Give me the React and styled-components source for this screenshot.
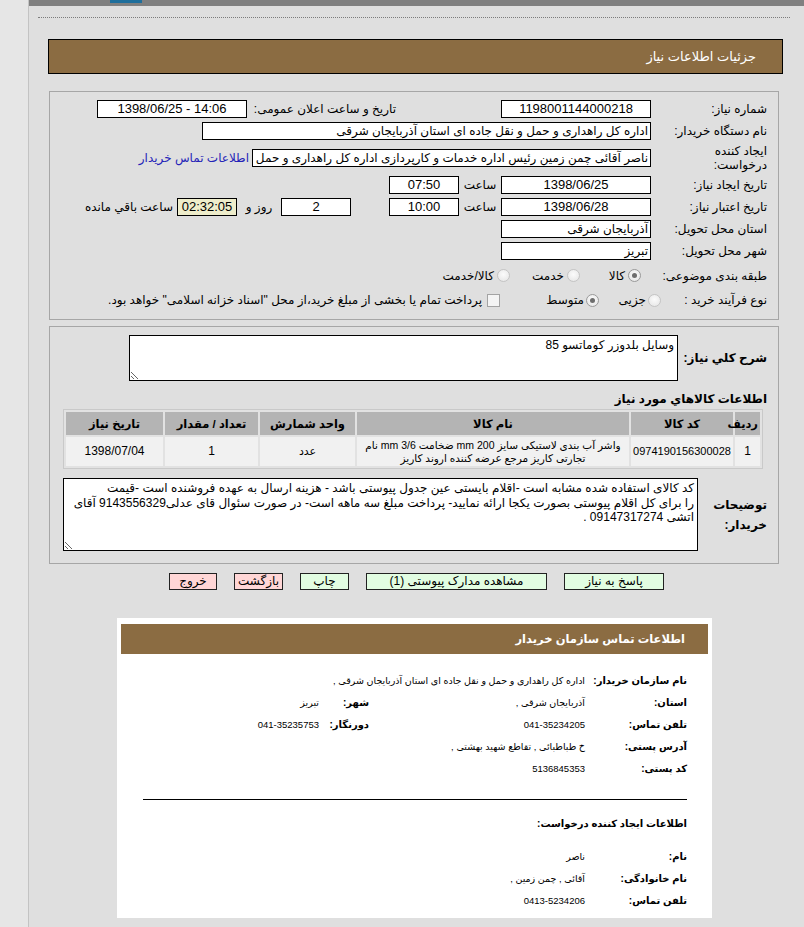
import React from "react";
import styled, { createGlobalStyle } from "styled-components";

const FONT = `"Liberation Sans", "DejaVu Sans", sans-serif`;

const GlobalStyle = createGlobalStyle`
  html, body { margin: 0; padding: 0; background: #dfdfdf; }
  body { font-family: ${FONT}; color: #000; }
`;

const Page = styled.div`
  display: flex;
  min-height: 927px;
  overflow: hidden;
`;

const SideStrip = styled.div`
  width: 28px;
  flex: none;
  background: #e6e6e6;
  border-right: 1px solid #c3c3c3;
`;

const Main = styled.div`
  flex: 1;
  min-width: 0;
  background: #dfdfdf;
  padding-bottom: 12px;
`;

const TopBar = styled.div`
  height: 6px;
  background: #808080;
  display: flex;
  align-items: flex-start;
`;

const TopBadge = styled.span`
  margin-left: 81px;
  width: 32px;
  height: 3px;
  background: #1f6f9c;
`;

const DottedRule = styled.div`
  margin: 11px 14px 0 9px;
  border-top: 1px dotted #7c7c7c;
`;

const TitleBar = styled.div`
  margin: 21px 21px 0 19px;
  height: 35px;
  box-sizing: border-box;
  border: 1px solid #000;
  background: #8b6c42;
  color: #fff;
  direction: rtl;
  display: flex;
  align-items: center;
  padding-right: 26px;
  font-size: 13px;
`;

const Panel = styled.div`
  margin: ${(p) => p.$mt}px 25px 0 20px;
  border: 1px solid #a6a6a6;
  direction: rtl;
  padding: ${(p) => p.$pad};
`;

const FieldRow = styled.div`
  display: flex;
  align-items: center;
  height: ${(p) => p.$h || 22}px;
`;

const Label = styled.div`
  flex: none;
  width: ${(p) => p.$w}px;
  box-sizing: border-box;
  padding-right: ${(p) => p.$pr || 0}px;
  font-size: ${(p) => p.$fs || 12}px;
  line-height: ${(p) => p.$lh || 16}px;
  font-weight: ${(p) => (p.$bold ? "bold" : "normal")};
  text-align: right;
  white-space: nowrap;
`;

const Box = styled.div`
  flex: none;
  box-sizing: border-box;
  width: ${(p) => p.$w}px;
  height: 18px;
  border: 1px solid #000;
  background: ${(p) => p.$bg || "#fff"};
  font-size: ${(p) => p.$fs || 13}px;
  line-height: 16px;
  text-align: ${(p) => p.$align || "center"};
  padding: 0 2px;
  overflow: hidden;
  white-space: nowrap;
`;

const Sep = styled.div`
  flex: none;
  width: ${(p) => p.$w}px;
  text-align: center;
  font-size: 12px;
  white-space: nowrap;
`;

const Gap = styled.div`
  flex: none;
  width: ${(p) => p.$w}px;
`;

const Plain = styled.span`
  margin-right: ${(p) => p.$mr || 0}px;
  font-size: 12px;
  white-space: nowrap;
`;

const Link = styled.a`
  margin-right: 3px;
  font-size: 12px;
  color: #2424b8;
  text-decoration: none;
  white-space: nowrap;
`;

const Option = styled.label`
  flex: none;
  display: flex;
  align-items: center;
  box-sizing: border-box;
  width: ${(p) => (p.$w ? `${p.$w}px` : "auto")};
  gap: ${(p) => p.$gap || 3}px;
  margin-right: ${(p) => p.$mr || 0}px;
  font-size: 12px;
  white-space: nowrap;
`;

const RadioMark = styled.span`
  flex: none;
  box-sizing: border-box;
  width: 13px;
  height: 13px;
  border-radius: 50%;
  border: 1px solid ${(p) => (p.$checked ? "#9a9a9a" : "#c4c4c4")};
  background: radial-gradient(circle at 50% 40%, #fbfbfb 0%, #e4e4e4 100%);
  display: inline-flex;
  align-items: center;
  justify-content: center;
  &::after {
    content: "";
    width: 5px;
    height: 5px;
    border-radius: 50%;
    background: ${(p) => (p.$checked ? "#6e6e6e" : "transparent")};
  }
`;

const CheckMark = styled.span`
  flex: none;
  box-sizing: border-box;
  width: 13px;
  height: 13px;
  border: 1px solid #a3a3a3;
  background: #f4f4f4;
`;

const TextArea = styled.textarea`
  display: block;
  flex: none;
  box-sizing: border-box;
  width: ${(p) => p.$w}px;
  height: ${(p) => p.$h}px;
  margin: 0;
  border: 1px solid #000;
  background: #fff;
  color: #000;
  font-family: ${FONT};
  font-size: 12px;
  line-height: 14.5px;
  padding: 2px 3px;
  white-space: pre;
  overflow: hidden;
  resize: both;
  direction: rtl;
  outline: none;
`;

const SectionHeading = styled.div`
  margin-top: 10px;
  height: 16px;
  line-height: 16px;
  font-size: 12px;
  font-weight: bold;
  text-align: right;
`;

const ItemsTable = styled.table`
  table-layout: fixed;
  width: 700px;
  margin: 2px 4px 0 0;
  border: 1px solid #c9c9c9;
  border-spacing: 2px;
  background: #e2e2e2;
  font-size: 12px;
  direction: rtl;
`;

const Th = styled.th`
  box-sizing: border-box;
  width: ${(p) => p.$w}px;
  height: 23px;
  background: #b4b4b4;
  font-weight: bold;
  font-size: 11.5px;
  padding: 0 2px;
  white-space: nowrap;
`;

const Td = styled.td`
  box-sizing: border-box;
  height: 29px;
  background: #f1f1f1;
  text-align: center;
  font-size: ${(p) => p.$fs || 12}px;
  line-height: 13px;
  padding: 0 1px;
  white-space: nowrap;
  overflow: hidden;
`;

const NotesRow = styled.div`
  display: flex;
  align-items: center;
  margin-top: 9px;
`;

const ButtonRow = styled.div`
  display: flex;
  justify-content: center;
  gap: 17px;
  margin-top: 9px;
  direction: rtl;
`;

const Button = styled.button`
  box-sizing: border-box;
  width: ${(p) => p.$w}px;
  height: 17px;
  padding: 0;
  border: 1px solid #222;
  background: ${(p) => (p.$tone === "red" ? "#ffd6d6" : "#e2fde2")};
  font-family: ${FONT};
  font-size: 12px;
  line-height: 15px;
  color: #000;
  white-space: nowrap;
  overflow: visible;
  cursor: pointer;
`;

const Card = styled.div`
  margin: 28px 92px 0 88px;
  background: #fff;
  padding: 6px 4px 7px;
  direction: rtl;
`;

const CardHeader = styled.div`
  height: 30px;
  background: #8b6c42;
  color: #fff;
  font-weight: bold;
  font-size: 11.5px;
  display: flex;
  align-items: center;
  padding-right: 23px;
`;

const CardBody = styled.div`
  padding: 15px 21px 0 22px;
`;

const InfoGrid = styled.div`
  display: grid;
  grid-template-columns: ${(p) => p.$cols};
  grid-auto-rows: 22px;
  align-items: center;
  margin-top: ${(p) => p.$mt || 0}px;
`;

const InfoLabel = styled.div`
  font-size: 10px;
  font-weight: bold;
  white-space: nowrap;
  padding-right: ${(p) => p.$pr || 0}px;
`;

const InfoValue = styled.div`
  font-size: 9.5px;
  white-space: nowrap;
  padding-right: ${(p) => p.$pr || 0}px;
  grid-column: ${(p) => (p.$span ? `span ${p.$span}` : "auto")};
`;

const Rule = styled.hr`
  border: 0;
  border-top: 1px solid #000;
  margin: 20px 0 0;
`;

const SubHeading = styled.div`
  margin-top: 16px;
  height: 16px;
  line-height: 16px;
  font-size: 10px;
  font-weight: bold;
`;

const notes =
  "کد کالای استفاده شده مشابه است -اقلام بایستی عین جدول پیوستی باشد - هزینه ارسال به عهده فروشنده است -قیمت\n" +
  "را برای کل اقلام پیوستی بصورت یکجا ارائه نمایید- پرداخت مبلغ سه ماهه است- در صورت سئوال قای عدلی9143556329 آقای\n" +
  "اتشی 09147317274 .";

function Radio({ checked, children, mr, gap, w }) {
  return (
    <Option $mr={mr} $gap={gap} $w={w}>
      <RadioMark $checked={checked} />
      <span>{children}</span>
    </Option>
  );
}

export default function App() {
  return (
    <>
      <GlobalStyle />
      <Page>
        <SideStrip />
        <Main>
          <TopBar>
            <TopBadge />
          </TopBar>
          <DottedRule />
          <TitleBar>جزئیات اطلاعات نیاز</TitleBar>

          <Panel $mt={17} $pad="6px 11px 8px 0">
            <FieldRow>
              <Label $w={116}>شماره نیاز:</Label>
              <Box $w={150}>1198001144000218</Box>
              <Label $w={254} $pr={105}>تاریخ و ساعت اعلان عمومی:</Label>
              <Box $w={150} dir="ltr">1398/06/25 - 14:06</Box>
            </FieldRow>
            <FieldRow>
              <Label $w={116}>نام دستگاه خریدار:</Label>
              <Box $w={449} $align="right" $fs={12}>اداره کل راهداری و حمل و نقل جاده ای استان آذربایجان شرقی</Box>
            </FieldRow>
            <FieldRow $h={31}>
              <Label $w={116} $lh={14}>
                ایجاد کننده
                <br />
                درخواست:
              </Label>
              <Box $w={399} $align="right" $fs={12}>
                ناصر آقائی چمن زمین رئیس اداره خدمات و کارپردازی اداره کل راهداری و حمل و
              </Box>
              <Link href="#">اطلاعات تماس خریدار</Link>
            </FieldRow>
            <FieldRow $h={23}>
              <Label $w={116}>تاریخ ایجاد نیاز:</Label>
              <Box $w={150}>1398/06/25</Box>
              <Sep $w={42}>ساعت</Sep>
              <Box $w={70}>07:50</Box>
            </FieldRow>
            <FieldRow>
              <Label $w={116}>تاریخ اعتبار نیاز:</Label>
              <Box $w={150}>1398/06/28</Box>
              <Sep $w={42}>ساعت</Sep>
              <Box $w={70}>10:00</Box>
              <Gap $w={38} />
              <Box $w={70}>2</Box>
              <Sep $w={44}>روز و</Sep>
              <Box $w={60} $bg="#eeedcb">02:32:05</Box>
              <Plain $mr={4}>ساعت باقي مانده</Plain>
            </FieldRow>
            <FieldRow>
              <Label $w={116}>استان محل تحویل:</Label>
              <Box $w={150} $align="right" $fs={12}>آذربایجان شرقی</Box>
            </FieldRow>
            <FieldRow>
              <Label $w={116}>شهر محل تحویل:</Label>
              <Box $w={150} $align="right" $fs={12}>تبریز</Box>
            </FieldRow>
            <FieldRow $h={27}>
              <Label $w={116}>طبقه بندی موضوعی:</Label>
              <Radio checked mr={10} w={61}>کالا</Radio>
              <Radio w={70}>خدمت</Radio>
              <Radio>کالا/خدمت</Radio>
            </FieldRow>
            <FieldRow>
              <Label $w={106}>نوع فرآیند خرید :</Label>
              <Radio gap={2} w={62}>جزیی</Radio>
              <Radio checked gap={2} w={99}>متوسط</Radio>
              <Option $gap={5}>
                <CheckMark />
                <span>پرداخت تمام یا بخشی از مبلغ خرید،از محل "اسناد خزانه اسلامی" خواهد بود.</span>
              </Option>
            </FieldRow>
          </Panel>

          <Panel $mt={6} $pad="8px 11px 12px 15px">
            <FieldRow $h={46}>
              <Label $w={89} $bold>شرح کلي نیاز:</Label>
              <TextArea $w={549} $h={46} readOnly value="وسایل بلدوزر کوماتسو 85" />
            </FieldRow>
            <SectionHeading>اطلاعات کالاهاي مورد نیاز</SectionHeading>
            <ItemsTable>
              <thead>
                <tr>
                  <Th $w={25}>ردیف</Th>
                  <Th $w={102}>کد کالا</Th>
                  <Th $w={272}>نام کالا</Th>
                  <Th $w={95}>واحد شمارش</Th>
                  <Th $w={93}>تعداد / مقدار</Th>
                  <Th $w={97}>تاریخ نیاز</Th>
                </tr>
              </thead>
              <tbody>
                <tr>
                  <Td>1</Td>
                  <Td $fs={11}>0974190156300028</Td>
                  <Td $fs={10.5}>
                    واشر آب بندی لاستیکی سایز mm 200 ضخامت mm 3/6 نام
                    <br />
                    تجارتی کاریز مرجع عرضه کننده اروند کاریز
                  </Td>
                  <Td $fs={11}>عدد</Td>
                  <Td>1</Td>
                  <Td>1398/07/04</Td>
                </tr>
              </tbody>
            </ItemsTable>
            <NotesRow>
              <Label $w={69} $bold $lh={20}>
                توضیحات
                <br />
                خریدار:
              </Label>
              <TextArea $w={635} $h={73} readOnly value={notes} />
            </NotesRow>
          </Panel>

          <ButtonRow>
            <Button $w={100}>پاسخ به نیاز</Button>
            <Button $w={181}>مشاهده مدارک پیوستی (1)</Button>
            <Button $w={49}>چاپ</Button>
            <Button $w={49} $tone="red">بازگشت</Button>
            <Button $w={48} $tone="red">خروج</Button>
          </ButtonRow>

          <Card>
            <CardHeader>اطلاعات تماس سازمان خریدار</CardHeader>
            <CardBody>
              <InfoGrid $cols="102px 213px 50px 1fr">
                <InfoLabel>نام سازمان خریدار:</InfoLabel>
                <InfoValue $span={3}>اداره کل راهداری و حمل و نقل جاده ای استان آذربایجان شرقی ,</InfoValue>
                <InfoLabel>استان:</InfoLabel>
                <InfoValue>آذربایجان شرقی ,</InfoValue>
                <InfoLabel $pr={3}>شهر:</InfoLabel>
                <InfoValue $pr={3}>تبریز</InfoValue>
                <InfoLabel>تلفن تماس:</InfoLabel>
                <InfoValue>041-35234205</InfoValue>
                <InfoLabel $pr={3}>دورنگار:</InfoLabel>
                <InfoValue $pr={3}>041-35235753</InfoValue>
                <InfoLabel>آدرس پستی:</InfoLabel>
                <InfoValue $span={3}>خ طباطبائی , تقاطع شهید بهشتی ,</InfoValue>
                <InfoLabel>کد پستی:</InfoLabel>
                <InfoValue $span={3}>5136845353</InfoValue>
              </InfoGrid>
              <Rule />
              <SubHeading>اطلاعات ایجاد کننده درخواست:</SubHeading>
              <InfoGrid $cols="102px 1fr" $mt={13}>
                <InfoLabel>نام:</InfoLabel>
                <InfoValue>ناصر</InfoValue>
                <InfoLabel>نام خانوادگی:</InfoLabel>
                <InfoValue>آقائی , چمن زمین ,</InfoValue>
                <InfoLabel>تلفن تماس:</InfoLabel>
                <InfoValue>0413-5234206</InfoValue>
              </InfoGrid>
            </CardBody>
          </Card>
        </Main>
      </Page>
    </>
  );
}
